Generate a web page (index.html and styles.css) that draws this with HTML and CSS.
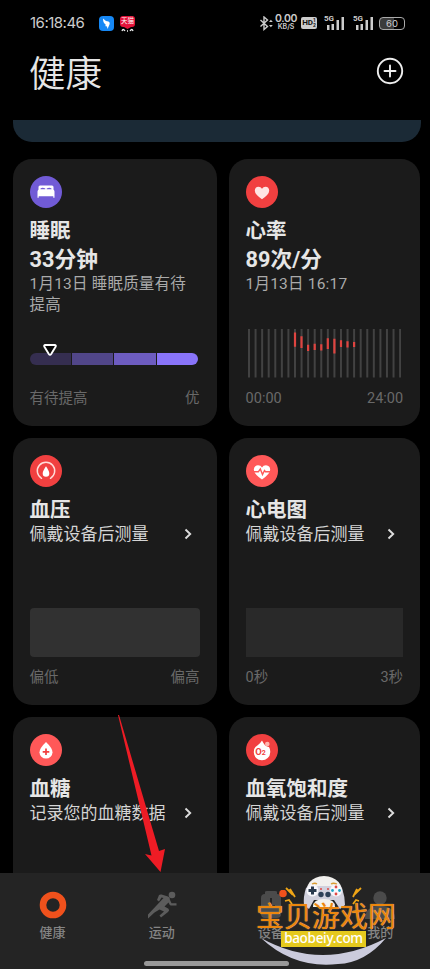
FILE: index.html
```html
<!DOCTYPE html>
<html lang="zh-CN">
<head>
<meta charset="utf-8">
<title>健康</title>
<link rel="stylesheet" href="styles.css">
</head>
<body>
<div class="phone">
  <div class="status">
    <span class="clock">16:18:46</span>
    <svg class="app-bird" width="15" height="15" viewBox="0 0 15 15"><rect width="15" height="15" rx="4" fill="#1688f5"/><path d="M4 2.5Q6 5 9.5 5.5Q11.5 6.5 10.5 8.5L8.5 13L8 10.5L6 10L7 9Q4 7 4 2.5Z" fill="#fff"/></svg>
    <div class="app-cat"><span>天猫</span><svg width="15" height="5" viewBox="0 0 15 5"><path d="M4 0H11L7.5 2Z" fill="#e5133a"/><path d="M2 4Q3 1 5 4M10 4Q12 1 13 4M7 4H8" fill="none" stroke="#eee" stroke-width="1.3"/></svg></div>
    <div class="status-right">
      <svg width="15" height="15" viewBox="0 0 15 15" fill="none" stroke="#ccc" stroke-width="1.4"><path d="M1.500 4L8.500 10.500L5 13.500V1L8.500 4L1.500 10.500"/><path d="M10 6L11.900 3.800L13.800 6ZM10 9L11.900 11.200L13.800 9Z" fill="#ccc" stroke="none"/></svg>
      <div class="speed"><b>0.00</b><small>KB/S</small></div>
      <div class="hd"><span>HD</span><i>1<br>2</i></div>
      <div class="signal"><small>5G</small><svg width="19" height="14" viewBox="0 0 19 14" fill="#ccc"><path d="M2 9h2.500v5H2zM6.500 8H9v6H6.500zM11.500 4H14v10h-2.500zM16.500 1H19v13h-2.500z"/></svg></div>
      <div class="signal second"><small>5G</small><svg width="19" height="14" viewBox="0 0 19 14" fill="#ccc"><path d="M2 9h2.500v5H2zM6.500 8H9v6H6.500zM11.500 4H14v10h-2.500zM16.500 1H19v13h-2.500z"/></svg></div>
      <div class="battery">60</div>
    </div>
  </div>

  <header class="header">
    <h1>健康</h1>
    <svg width="28" height="28" viewBox="0 0 28 28" fill="none" stroke="#eee" stroke-width="1.900" stroke-linecap="round"><circle cx="14" cy="14" r="12.200"/><path d="M8.500 14H19.500M14 8.500V19.500"/></svg>
  </header>

  <main class="content">
    <div class="banner"></div>
    <div class="cards">
      <section class="card">
        <svg class="badge" viewBox="0 0 32 32"><circle cx="16" cy="16" r="16" fill="#715bd6"/><path d="M8.500 14V11Q8.500 9.500 10 9.500H22Q23.500 9.500 23.500 11V14Z" fill="#fff"/><path d="M10.500 13.500V12.500Q12.500 11 15.300 12.500V13.500ZM16.700 13.500V12.500Q19.500 11 21.500 12.500V13.500Z" fill="#715bd6"/><path d="M7.500 15.500Q7.500 13.500 9.500 13.500H22.500Q24.500 13.500 24.500 15.500V21.800H23.300V20.300H8.700V21.800H7.500Z" fill="#fff"/></svg>
        <h2>睡眠</h2>
        <p class="value">33分钟</p>
        <p class="date">1月13日 睡眠质量有待提高</p>
        <div class="chart sleep">
          <svg class="pointer" width="16" height="14" viewBox="0 0 16 14"><path d="M2.800 2H13.200Q14.300 2.500 13.600 3.700L9.200 11Q8 12.600 6.800 11L2.400 3.700Q1.700 2.500 2.800 2Z" fill="#080808" stroke="#fff" stroke-width="1.900"/></svg>
          <div class="segments"><i class="s1"></i><i class="s2"></i><i class="s3"></i><i class="s4"></i></div>
        </div>
        <div class="range"><span>有待提高</span><span>优</span></div>
      </section>

      <section class="card">
        <svg class="badge" viewBox="0 0 32 32"><circle cx="16" cy="16" r="16" fill="#f14040"/><path d="M16 23.300Q8.800 18.500 8.800 14.600Q9 10.800 12.500 10.800Q14.800 10.800 16 12.700Q17.200 10.800 19.500 10.800Q23 10.800 23.200 14.600Q23.200 18.500 16 23.300Z" fill="#ffe5e3"/></svg>
        <h2>心率</h2>
        <p class="value">89次/分</p>
        <p class="date">1月13日 16:17</p>
        <svg class="chart heart" viewBox="0 0 157.500 48.500"><path d="M3 24.250H156" stroke="#424242" stroke-width="48.500" stroke-dasharray="2 4.570" transform="translate(-1 0)"/><path d="M49 3.500V17.800M55.500 7.300V19M62.100 15.700V22M68.700 14.700V21M75.300 15.300V21.500M81.800 9.300V20M88.400 9.700V24.500M95 11.300V18M101.500 12.300V18.500M108.100 13V18" fill="none" stroke="#df4440" stroke-width="2.200"/></svg>
        <div class="range"><span>00:00</span><span>24:00</span></div>
      </section>

      <section class="card">
        <svg class="badge" viewBox="0 0 32 32"><circle cx="16" cy="16" r="16" fill="#f14040"/><path d="M11.500 23.300A8.700 8.700 0 1 1 20.500 23.300" fill="none" stroke="#ffdcd9" stroke-width="1.500" stroke-linecap="round"/><path d="M16 11.300Q19.300 16 19.300 18.400A3.300 3.300 0 0 1 12.700 18.400Q12.700 16 16 11.300Z" fill="#fff"/></svg>
        <h2>血压</h2>
        <p class="prompt">佩戴设备后测量<svg class="chevron" viewBox="0 0 8 12"><path d="M1.500 1.500L6.200 6L1.500 10.500"/></svg></p>
        <div class="chart empty"></div>
        <div class="range"><span>偏低</span><span>偏高</span></div>
      </section>

      <section class="card">
        <svg class="badge" viewBox="0 0 32 32"><circle cx="16" cy="16" r="16" fill="#ff5858"/><path d="M16 24.500Q7.800 19 7.800 14.600Q8 10.500 12 10.200Q14.800 10.300 16 12.400Q17.200 10.300 20 10.200Q24 10.500 24.200 14.600Q24.200 19 16 24.500Z" fill="#fff"/><path d="M7.500 16.800H12.300L14.300 14L16.500 19.500L18.500 15.500L19.500 16.800H24.500" fill="none" stroke="#ff5858" stroke-width="1.400"/></svg>
        <h2>心电图</h2>
        <p class="prompt">佩戴设备后测量<svg class="chevron" viewBox="0 0 8 12"><path d="M1.500 1.500L6.200 6L1.500 10.500"/></svg></p>
        <div class="chart empty dim"></div>
        <div class="range"><span>0秒</span><span>3秒</span></div>
      </section>

      <section class="card">
        <svg class="badge" viewBox="0 0 32 32"><circle cx="16" cy="16" r="16" fill="#ff5858"/><path d="M16 8Q22.500 14.300 22.500 18.200A6.500 6.300 0 0 1 9.500 18.200Q9.500 14.300 16 8Z" fill="#fff"/><path d="M12.700 17.800H19.300M16 14.500V21.100" stroke="#f14040" stroke-width="1.700"/></svg>
        <h2>血糖</h2>
        <p class="prompt">记录您的血糖数据<svg class="chevron" viewBox="0 0 8 12"><path d="M1.500 1.500L6.200 6L1.500 10.500"/></svg></p>
      </section>

      <section class="card">
        <svg class="badge" viewBox="0 0 32 32"><circle cx="16" cy="16" r="16" fill="#f14040"/><path d="M16 6.500Q17.500 9.500 19 11.300Q21 13 23 13Q24.500 15.500 24.200 18.500A8.200 8 0 0 1 7.800 18.200Q7.800 13 12 11Q14.500 9 16 6.500Z" fill="#fff"/><circle cx="21.300" cy="10" r="2.300" fill="#ffb7b1"/><text class="oxygen" x="9.200" y="21.300">O<tspan class="oxygen-sub">2</tspan></text></svg>
        <h2>血氧饱和度</h2>
        <p class="prompt">佩戴设备后测量<svg class="chevron" viewBox="0 0 8 12"><path d="M1.500 1.500L6.200 6L1.500 10.500"/></svg></p>
      </section>
    </div>
  </main>

  <nav class="tabs">
    <div class="tab"><svg width="32" height="30" viewBox="0 0 32 30"><circle cx="16" cy="15" r="10" fill="none" stroke="#f0511c" stroke-width="6.600"/></svg><span>健康</span></div>
    <div class="tab"><svg width="32" height="30" viewBox="0 0 32 30" fill="#5c5c5c"><circle cx="26" cy="5" r="3.300"/><path d="M13 5Q14 4.300 15.500 4.600L22 6.500Q24.500 7.500 23.800 9.500L25.500 13.300H30.500V15.500H25Q24 15.500 23.500 14.500L22.500 12.500L18.500 16.500L22.500 18.800Q24 20.500 22 22L15 27.500L13.500 25.500L18 21.500L13.500 19.500L8.500 22.500L2 28.500V24.500L10.500 15.500L17.500 8L15.500 7.500L13 11.500L11 10Z"/></svg><span>运动</span></div>
    <div class="tab"><svg width="32" height="30" viewBox="0 0 32 30"><path d="M6 8Q6 4 10 4V2Q10 1 12 1H20Q22 1 22 2V4Q26 4 26 8V24Q26 28 22 28H10Q6 28 6 24Z" fill="#4b4b4b"/><path d="M16 8V16H20" fill="none" stroke="#242424" stroke-width="2"/><circle cx="28" cy="3.500" r="3.800" fill="#f0511c"/></svg><span>设备</span></div>
    <div class="tab"><svg width="32" height="30" viewBox="0 0 32 30"><circle cx="16" cy="8" r="6.700" fill="#4b4b4b"/><path d="M1 29Q1 16 16 16Q31 16 31 29Z" fill="#4b4b4b"/></svg><span>我的</span></div>
    <div class="home-bar"></div>
  </nav>

  <svg class="arrow" width="50" height="162" viewBox="0 0 50 162"><path d="M2 2L42 138L48 136L43.500 159L28 141L34.500 142.500L1 2Z" fill="#ee1c25"/></svg>

  <div class="watermark">
    <svg width="140" height="94" viewBox="0 0 140 94">
      <path d="M5 65Q66 99 130 65Q109 90 82 91Q38 96 5 65Z" fill="#cbcbdc"/>
      <path d="M50 24Q49 4 68 3Q87 4 87 24Z" fill="#f2f1ee"/>
      <path d="M50 15Q54 10 60 13H76Q82 10 86 15Q89 24 89 32L84 36L78 27H58L53 36L48 32Q47 24 50 15Z" fill="#d1d1dd"/>
      <path d="M57 34Q57 26 68 26Q79 26 79 34Z" fill="#f4f3ef"/>
      <ellipse cx="56.500" cy="17.500" rx="6" ry="6" fill="#f7f7fc"/><ellipse cx="80" cy="17.500" rx="6" ry="6" fill="#f7f7fc"/>
      <path d="M52.500 17.500H60.500M56.500 13.500V21.500" stroke="#293a4d" stroke-width="3"/>
      <g fill="#e04943"><circle cx="80" cy="14" r="1.400"/><circle cx="80" cy="21" r="1.400"/><circle cx="65" cy="16" r="1"/><circle cx="72" cy="16" r="1"/></g><g fill="#20a5c5"><circle cx="76.500" cy="17.500" r="1.400"/><circle cx="83.500" cy="17.500" r="1.400"/></g>
      <g fill="#2d4057"><circle cx="65" cy="21.500" r="2.700"/><circle cx="72" cy="21.500" r="2.700"/></g>
      <path d="M56 11Q59 9.500 61 11M75 11Q77 9.500 81 11" fill="none" stroke="#d89b31" stroke-width="1.300"/>
      <path d="M30 15L35 20L34 16L39 24M29 28L33 27L36 31M105 15L100 20L101 16L97 24M103 28L100 27L97 31" fill="none" stroke="#efa516" stroke-width="1.800"/>
    </svg>
    <div class="wm-text"><b>宝贝游戏网</b><span>baobeiy.com</span></div>
  </div>
</div>
</body>
</html>
```

FILE: styles.css
```css
* { box-sizing: border-box; }
body { margin: 0; background: #000; }
h1, h2, p { margin: 0; }
svg { display: block; flex: none; }

.phone {
  position: relative;
  display: flex;
  flex-direction: column;
  width: 430px;
  height: 969px;
  overflow: hidden;
  background: #000;
  color: #e6e6e6;
  font-family: Roboto, "Noto Sans CJK SC", sans-serif;
}

.status {
  display: flex;
  align-items: center;
  height: 46px;
  padding: 0 25px 0 30px;
  color: #ccc;
}
.clock { width: 69px; font: 15px/18px Inter, sans-serif; letter-spacing: -0.5px; white-space: nowrap; }
.app-cat { width: 15px; height: 15px; margin-left: 6px; }
.app-cat span {
  display: block;
  height: 11px;
  border-radius: 3px;
  background: #e5133a;
  color: #fff;
  font-size: 6.5px;
  line-height: 10px;
  text-align: center;
  white-space: nowrap;
}
.status-right { display: flex; align-items: center; margin-left: auto; }
.speed { display: flex; flex-direction: column; align-items: center; width: 22px; margin-left: 1px; }
.speed b { font: 600 10.5px/8px Inter, sans-serif; letter-spacing: -0.4px; }
.speed small { font: 600 7px/8px Inter, sans-serif; }
.hd {
  display: flex;
  align-items: center;
  justify-content: center;
  width: 16px;
  height: 12px;
  margin-left: 4px;
  border-radius: 2px;
  background: #ccc;
  color: #111;
  font: 700 8px/12px Roboto, sans-serif;
}
.hd i { font: 700 5px/5px Roboto, sans-serif; }
.signal { position: relative; width: 19px; margin-left: 8px; }
.signal small { position: absolute; top: -1px; left: -1px; font: 700 8px/8px Roboto, sans-serif; }
.signal.second { margin-left: 10px; }
.battery {
  width: 26px;
  height: 13px;
  margin-left: 6px;
  border: 1px solid #aaa;
  border-radius: 4px;
  background: linear-gradient(90deg, #3b3b3b 60%, #000 60%);
  font: 9.5px/11px Inter, sans-serif;
  text-align: center;
}

.header {
  display: flex;
  align-items: center;
  justify-content: space-between;
  height: 74px;
  padding: 0 26px 24px 29px;
}
.header h1 { padding-top: 7px; font-size: 36.5px; line-height: 52px; font-weight: 350; }

.content { height: 753px; overflow: hidden; }
.banner { height: 22px; margin: 0 9.5px 17px 12.5px; border-radius: 0 0 19px 19px; background: #1b2a36; }
.cards {
  display: grid;
  grid-template-columns: 204px 191.5px;
  grid-auto-rows: 267.2px;
  gap: 12px;
  padding-left: 12.6px;
}
.card {
  display: flex;
  flex-direction: column;
  padding: 17px 17px 17.5px;
  border-radius: 19px;
  background: #1b1b1b;
}
.badge { width: 32px; height: 32px; }
.card h2 { margin-top: 9px; font-size: 20.5px; line-height: 28px; font-weight: 700; }
.value { font-size: 21.7px; line-height: 29px; font-weight: 700; }
.date { width: 162px; color: #aaa; font-size: 15.5px; line-height: 21px; letter-spacing: 0.2px; }
.prompt { display: flex; align-items: center; justify-content: space-between; margin-top: -1px; color: #d5d5d5; font-size: 17px; line-height: 22px; }
.chevron { width: 8px; height: 12px; margin-right: 8px; fill: none; stroke: #ddd; stroke-width: 1.9; }
.chart { height: 48.5px; margin-top: auto; }
.range { display: flex; justify-content: space-between; margin-top: 11px; color: #696969; font-size: 14.5px; line-height: 20px; }
.heart { width: 157.5px; }
.empty { border-radius: 4px; background: #313131; }
.dim { border-radius: 0; background: #292929; }
.sleep { padding-top: 14px; }
.pointer { position: relative; z-index: 1; margin: 0 0 -4px 12.5px; }
.segments { display: flex; gap: 1px; width: 168.5px; height: 12px; overflow: hidden; border-radius: 6px; }
.segments i { flex: 1; }
.s1 { background: #352e50; }
.s2 { background: #514689; }
.s3 { background: #6d5cc0; }
.s4 { background: #8974f9; }
.oxygen { fill: #f14040; font: 700 9.5px Roboto, sans-serif; }
.oxygen-sub { font-size: 7px; }

.tabs {
  position: relative;
  display: grid;
  grid-template-columns: repeat(4, 109.2px);
  height: 96px;
  padding-top: 16.5px;
  margin-left: -2px;
  background: #242424;
}
.tab { display: flex; flex-direction: column; align-items: center; color: #858585; font-size: 13px; line-height: 20px; font-weight: 500; }
.tab span { margin-top: 3px; }
.home-bar { position: absolute; left: 146px; bottom: 3px; width: 145px; height: 5px; border-radius: 3px; background: #999; }
.arrow { position: absolute; left: 117px; top: 713px; }

.watermark { position: absolute; left: 256px; top: 873px; width: 140px; height: 94px; }
.wm-text { position: absolute; inset: 31px 0 auto; display: flex; flex-direction: column; align-items: center; }
.wm-text b {
  color: #ec860d;
  font-size: 28px;
  line-height: 27px;
  font-weight: 400;
  white-space: nowrap;
  text-shadow: 0 0 1px #ffd9a0;
}
.wm-text span {
  width: 85px;
  height: 16px;
  margin-right: 5px;
  background: #e5c91d;
  color: #fff;
  font: 500 13.5px/15px "Noto Sans", sans-serif;
  letter-spacing: -0.3px;
  text-align: center;
}
```
